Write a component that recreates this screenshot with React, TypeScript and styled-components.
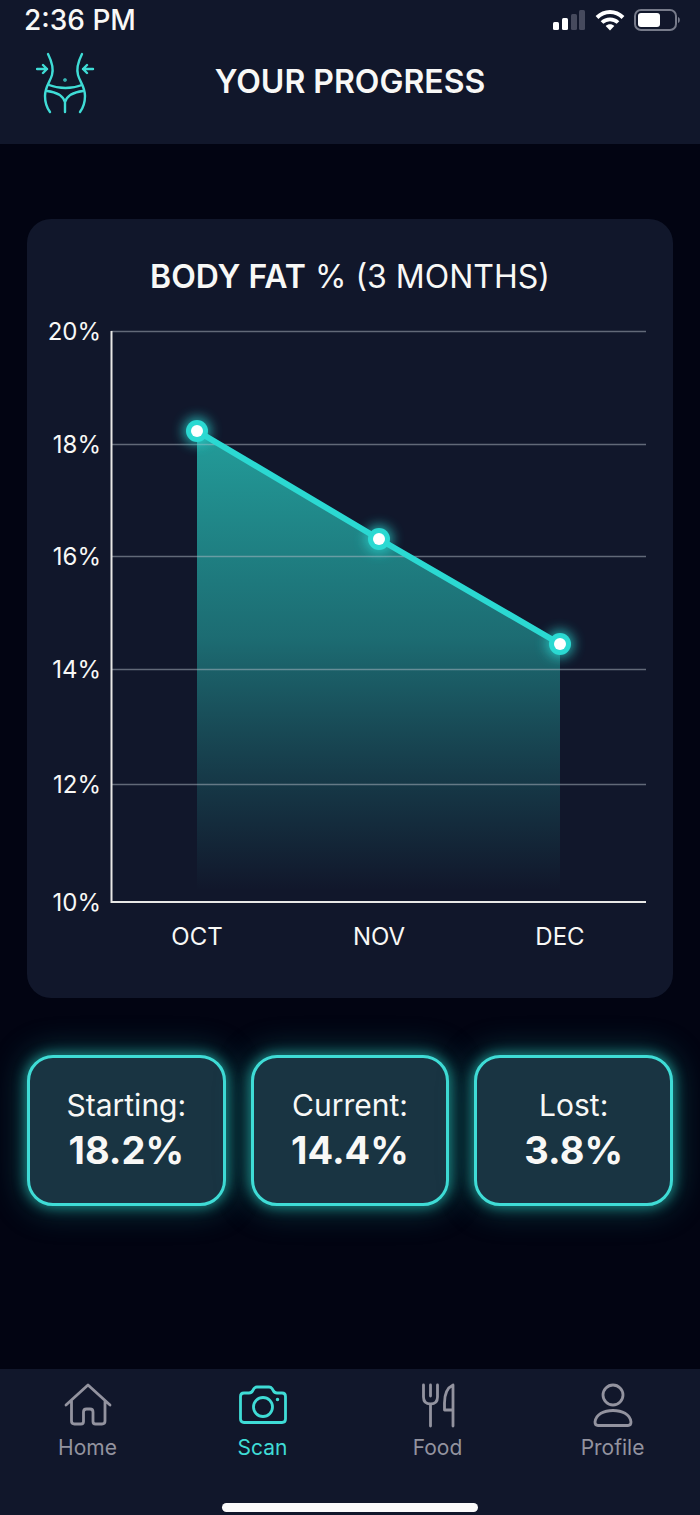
import React from 'react';
import styled, { createGlobalStyle } from 'styled-components';

const TEAL = '#3fdcd6';
const PANEL = '#11172b';
const WHITE = '#f8f8f6';

const GlobalStyle = createGlobalStyle`
  *, *::before, *::after { box-sizing: border-box; }
  html, body { margin: 0; padding: 0; background: #020412; }
  body { font-family: Inter, "Liberation Sans", sans-serif; color: ${WHITE}; }
`;

const Screen = styled.div`
  min-height: 100vh;
  display: flex;
  flex-direction: column;
`;

const Header = styled.header`
  background: ${PANEL};
`;

const StatusBar = styled.div`
  display: flex;
  align-items: center;
  justify-content: space-between;
  height: 40px;
  padding: 0 20px 0 24px;
`;

const Clock = styled.time`
  font-size: 28px;
  line-height: 40px;
  font-weight: 500;
`;

const StatusIcons = styled.div`
  display: flex;
  align-items: center;
  gap: 9px;
`;

const TitleBar = styled.div`
  display: grid;
  grid-template-columns: 60px 1fr 60px;
  align-items: center;
  height: 104px;
  padding: 0 36px 20px;
`;

const PageTitle = styled.h1`
  margin: 0;
  font-size: 32px;
  line-height: 40px;
  font-weight: 600;
  text-align: center;
`;

const Main = styled.main`
  flex: 1;
  padding: 75px 27px;
`;

const ChartCard = styled.section`
  background: ${PANEL};
  border-radius: 24px;
  padding: 38px 0 28px;
`;

const ChartTitle = styled.h2`
  margin: 0 0 13px;
  font-size: 32px;
  line-height: 40px;
  font-weight: 400;
  text-align: center;

  strong { font-weight: 600; }
`;

const ChartSvg = styled.svg`
  display: block;
  width: 100%;
  height: auto;
`;

const AxisText = styled.text`
  font-size: 24px;
  fill: ${WHITE};
`;

const Stats = styled.dl`
  display: grid;
  grid-template-columns: repeat(3, 1fr);
  gap: 25px;
  margin: 57px 0 0;
`;

const StatCard = styled.div`
  display: flex;
  flex-direction: column;
  align-items: center;
  padding: 27px 0 28px;
  background: #193442;
  border: 3px solid ${TEAL};
  border-radius: 26px;
  box-shadow: 0 0 12px 2px rgba(38, 190, 180, 0.6), 0 0 32px 4px rgba(30, 150, 145, 0.4);
`;

const StatLabel = styled.dt`
  font-size: 30px;
  line-height: 40px;
`;

const StatValue = styled.dd`
  margin: 0;
  font-size: 38px;
  line-height: 50px;
  font-weight: 700;
`;

const BottomBar = styled.footer`
  background: ${PANEL};
`;

const Nav = styled.nav`
  display: flex;
  justify-content: space-around;
  padding: 12px 0 0;
  height: 134px;
`;

const NavLink = styled.a<{ $active?: boolean }>`
  flex: 1;
  display: flex;
  flex-direction: column;
  align-items: center;
  gap: 5px;
  font-size: 21px;
  line-height: 28px;
  letter-spacing: 0;
  text-decoration: none;
  color: ${p => (p.$active ? TEAL : '#93939f')};
`;

const HomeIndicator = styled.div`
  width: 256px;
  height: 9px;
  margin: 0 auto 3px;
  border-radius: 5px;
  background: #fbfbfb;
`;

const BodyIcon = () => (
  <svg width="60" height="64" viewBox="0 0 60 64" fill="none" stroke={TEAL} strokeWidth="2.4" strokeLinecap="round" strokeLinejoin="round" aria-hidden="true">
    <path d="M12 4C15 10 18 18 16 25C14 32 9 37 9 46C9 53 11 58 14 62" />
    <path d="M46 4C43 10 40 18 42 25C44 32 49 37 49 46C49 53 47 58 44 62" />
    <path d="M13 35C23 39 36 39 46 35M11 41C20 42 27 46 29 52C31 46 38 42 47 41M29 52V62" />
    <path d="M1 19H11M7 15L11 19L7 23M57 19H47M51 15L47 19L51 23" />
    <circle cx="29" cy="30" r="0.6" />
  </svg>
);

const SignalIcon = () => (
  <svg width="33" height="22" viewBox="0 0 33 22" aria-hidden="true">
    <rect x="0" y="13" width="6" height="8" rx="1.5" fill="#fff" />
    <rect x="9" y="9" width="6" height="12" rx="1.5" fill="#fff" />
    <rect x="18" y="5" width="6" height="16" rx="1.5" fill="#464a5d" />
    <rect x="26" y="1" width="6" height="20" rx="1.5" fill="#464a5d" />
  </svg>
);

const WifiIcon = () => (
  <svg width="30" height="22" viewBox="0 0 30 22" aria-hidden="true">
    <path d="M2 8.5C9.5 1.2 20.5 1.2 28 8.5" fill="none" stroke="#fff" strokeWidth="4" />
    <path d="M7 13.5C11.5 9.2 18.5 9.2 23 13.5" fill="none" stroke="#fff" strokeWidth="3.8" />
    <path d="M10.7 17C13 14.6 17 14.6 19.3 17L15 21.5Z" fill="#fff" />
  </svg>
);

const BatteryIcon = () => (
  <svg width="46" height="22" viewBox="0 0 46 22" aria-hidden="true">
    <rect x="1" y="1" width="41" height="20" rx="6" fill="none" stroke="#777b8a" strokeWidth="2" />
    <rect x="4" y="4" width="22" height="14" rx="3" fill="#fff" />
    <path d="M44 8C46.4 8.6 46.4 13.4 44 14Z" fill="#777b8a" />
  </svg>
);

const iconProps = {
  width: 50,
  height: 48,
  viewBox: '0 0 50 48',
  fill: 'none',
  stroke: 'currentColor',
  strokeWidth: 2.8,
  strokeLinecap: 'round' as const,
  strokeLinejoin: 'round' as const,
  'aria-hidden': true,
};

const HomeIcon = () => (
  <svg {...iconProps}>
    <path d="M3 24L25 4L47 24M8.500 20V40Q8.500 43 11.500 43H18Q20.500 43 20.500 40.500V31Q20.500 28 23.500 28H27Q30 28 30 31V40.500Q30 43 32.500 43H39Q42 43 42 40V20" />
  </svg>
);

const CameraIcon = () => (
  <svg {...iconProps}>
    <path d="M6 12H11Q13.500 12 14.800 9.500L16 7.500Q17 6 19 6H31Q33 6 34 7.500L35.200 9.500Q36.500 12 39 12H44Q47.500 12 47.500 15.500V38Q47.500 41.500 44 41.500H6Q2.500 41.500 2.500 38V15.500Q2.500 12 6 12Z" />
    <circle cx="25" cy="26" r="9.500" />
    <circle cx="39.500" cy="18.500" r="1" fill="currentColor" strokeWidth="1.500" />
  </svg>
);

const FoodIcon = () => (
  <svg {...iconProps}>
    <path d="M10.500 4V16Q10.500 23 17.500 23Q24.500 23 24.500 16V4M17.500 4V15M17.500 23V45" />
    <path d="M40 45V4Q31.500 8 31.500 22V29H40" />
  </svg>
);

const ProfileIcon = () => (
  <svg {...iconProps}>
    <circle cx="25" cy="14" r="10" />
    <path d="M10 44.500Q7 44.500 7 41C8 33 16 29.500 25 29.500C34 29.500 42 33 43 41Q43 44.500 40 44.500Z" />
  </svg>
);

const GRID = [
  { label: '20%', y: 21 },
  { label: '18%', y: 134 },
  { label: '16%', y: 246 },
  { label: '14%', y: 359 },
  { label: '12%', y: 474 },
  { label: '10%', y: 592 },
];

const POINTS = [
  { label: 'OCT', x: 170, y: 121 },
  { label: 'NOV', x: 352, y: 229 },
  { label: 'DEC', x: 533, y: 334 },
];

const LINE = POINTS.map(p => `${p.x},${p.y}`).join(' ');

const BodyFatChart = () => (
  <ChartSvg viewBox="0 0 646 660" role="img" aria-label="Body fat from October to December">
    <defs>
      <linearGradient id="area" gradientUnits="userSpaceOnUse" x1="0" y1="121" x2="0" y2="580">
        <stop offset="0" stopColor="#26b5ae" stopOpacity="0.85" />
        <stop offset="0.45" stopColor="#24a5a2" stopOpacity="0.6" />
        <stop offset="0.75" stopColor="#239595" stopOpacity="0.28" />
        <stop offset="1" stopColor="#239595" stopOpacity="0" />
      </linearGradient>
      <filter id="glow" x="-150%" y="-150%" width="400%" height="400%">
        <feGaussianBlur stdDeviation="6" />
      </filter>
    </defs>
    <polygon points={`${LINE} 533,592 170,592`} fill="url(#area)" />
    {GRID.slice(0, 5).map(g => (
      <line key={g.label} x1="84" x2="619" y1={g.y + 0.5} y2={g.y + 0.5} stroke="#b4bcc6" strokeOpacity="0.5" strokeWidth="1.500" />
    ))}
    {GRID.map(g => (
      <AxisText key={g.label} x="74" y={g.y + 9} textAnchor="end">{g.label}</AxisText>
    ))}
    <path d="M84.500 21V592H619" fill="none" stroke="#e8e8e6" strokeWidth="2" />
    <polyline points={LINE} fill="none" stroke="#2bd9d2" strokeWidth="6" />
    {POINTS.map(p => (
      <g key={p.label}>
        <circle cx={p.x} cy={p.y} r="14" fill="#2bd9d2" opacity="0.7" filter="url(#glow)" />
        <circle cx={p.x} cy={p.y} r="11" fill="#2bd9d2" />
        <circle cx={p.x} cy={p.y} r="6" fill="#fff" />
        <AxisText x={p.x} y="635" textAnchor="middle">{p.label}</AxisText>
      </g>
    ))}
  </ChartSvg>
);

const STATS = [
  { label: 'Starting:', value: '18.2%' },
  { label: 'Current:', value: '14.4%' },
  { label: 'Lost:', value: '3.8%' },
];

const TABS = [
  { label: 'Home', Icon: HomeIcon },
  { label: 'Scan', Icon: CameraIcon, active: true },
  { label: 'Food', Icon: FoodIcon },
  { label: 'Profile', Icon: ProfileIcon },
];

export default function App() {
  return (
    <Screen>
      <GlobalStyle />
      <Header>
        <StatusBar>
          <Clock>2:36 PM</Clock>
          <StatusIcons>
            <SignalIcon />
            <WifiIcon />
            <BatteryIcon />
          </StatusIcons>
        </StatusBar>
        <TitleBar>
          <BodyIcon />
          <PageTitle>YOUR PROGRESS</PageTitle>
        </TitleBar>
      </Header>
      <Main>
        <ChartCard>
          <ChartTitle><strong>BODY FAT</strong> % (3 MONTHS)</ChartTitle>
          <BodyFatChart />
        </ChartCard>
        <Stats>
          {STATS.map(s => (
            <StatCard key={s.label}>
              <StatLabel>{s.label}</StatLabel>
              <StatValue>{s.value}</StatValue>
            </StatCard>
          ))}
        </Stats>
      </Main>
      <BottomBar>
        <Nav>
          {TABS.map(({ label, Icon, active }) => (
            <NavLink key={label} href={`#${label.toLowerCase()}`} $active={active} aria-current={active ? 'page' : undefined}>
              <Icon />
              {label}
            </NavLink>
          ))}
        </Nav>
        <HomeIndicator />
      </BottomBar>
    </Screen>
  );
}
